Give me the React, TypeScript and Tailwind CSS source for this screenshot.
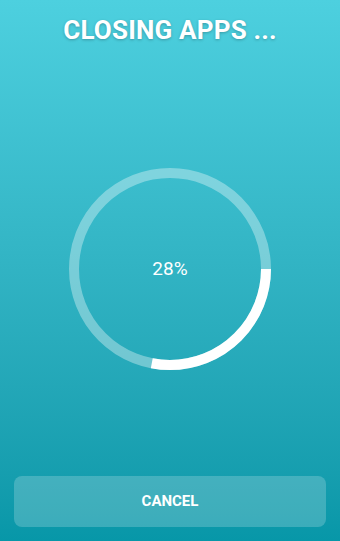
import React from 'react';

export default function App() {
  const percent = 28;
  const size = 202;
  const stroke = 10;
  const r = (size - stroke) / 2;
  const c = 2 * Math.PI * r;

  return (
    <div
      className="w-[340px] h-[541px] flex flex-col items-center bg-gradient-to-b from-[#4dd0df] to-[#0797a8] overflow-hidden"
      style={{ fontFamily: 'Roboto, "Liberation Sans", sans-serif' }}
    >
      {/* Title */}
      <h1 className="mt-[14px] text-[26px] leading-[32px] font-bold text-white tracking-[0.2px] [text-shadow:0_1px_3px_rgba(0,0,0,0.25)]">
        CLOSING APPS ...
      </h1>

      {/* Progress ring */}
      <div className="relative mt-[122px] w-[202px] h-[202px]">
        <svg width={size} height={size} viewBox={`0 0 ${size} ${size}`}>
          <circle
            cx={size / 2}
            cy={size / 2}
            r={r}
            fill="none"
            stroke="rgba(255,255,255,0.35)"
            strokeWidth={stroke}
          />
          <circle
            cx={size / 2}
            cy={size / 2}
            r={r}
            fill="none"
            stroke="#ffffff"
            strokeWidth={stroke}
            strokeDasharray={`${(c * percent) / 100} ${c}`}
          />
        </svg>
        <div className="absolute inset-0 flex items-center justify-center text-[19px] text-white">
          {percent}%
        </div>
      </div>

      {/* Cancel button */}
      <button className="mt-auto mb-[14px] w-[312px] h-[51px] rounded-[8px] bg-white/20 text-white text-[15px] font-bold">
        CANCEL
      </button>
    </div>
  );
}
